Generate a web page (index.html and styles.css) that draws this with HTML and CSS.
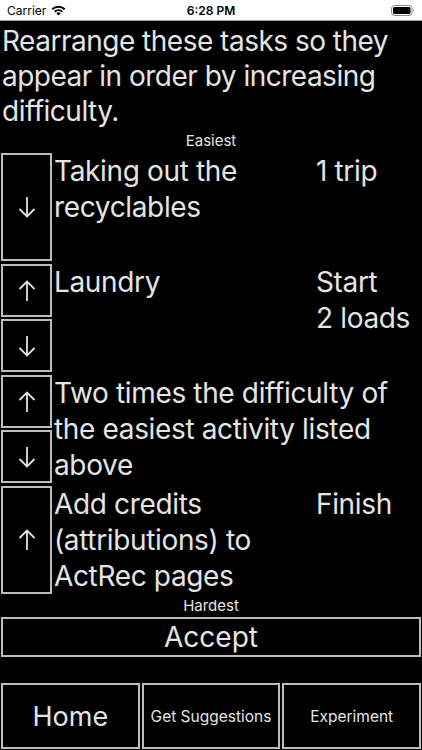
FILE: index.html
```html
<!DOCTYPE html>
<html lang="en">
<head>
<meta charset="utf-8">
<title>Rearrange tasks</title>
<link rel="stylesheet" href="styles.css">
</head>
<body>
<div class="status">
  <div class="status-left">
    <span>Carrier</span>
    <svg class="wifi" width="15" height="11" viewBox="0 0 15 11">
      <path d="M0.6 3.6 A10 10 0 0 1 14.4 3.6 L13 5 A8 8 0 0 0 2 5 Z" fill="#000"/>
      <path d="M3 6 A6.5 6.5 0 0 1 12 6 L10.6 7.4 A4.5 4.5 0 0 0 4.4 7.4 Z" fill="#000"/>
      <path d="M5.4 8.4 A3 3 0 0 1 9.6 8.4 L7.5 10.6 Z" fill="#000"/>
    </svg>
  </div>
  <div class="status-time">6:28 PM</div>
  <div class="status-right">
    <svg width="24" height="11" viewBox="0 0 24 11">
      <rect x="0.5" y="0.5" width="20.5" height="10" rx="3" fill="none" stroke="#888" stroke-width="1"/>
      <rect x="2" y="2" width="17.5" height="7" rx="1.6" fill="#000"/>
      <path d="M22 3.8 Q23.4 5.5 22 7.2 Z" fill="#888"/>
    </svg>
  </div>
</div>

<main class="screen">
  <p class="title">Rearrange these tasks so they appear in order by increasing difficulty.</p>
  <div class="label label-top">Easiest</div>

  <div class="rows">
    <div class="row">
      <div class="btns">
        <button class="arrow-btn" aria-label="Move down">
          <svg width="18" height="22" viewBox="0 0 18 22"><path d="M9 1 V20.5 M1.5 13 L9 20.5 L16.5 13" fill="none" stroke="#e2e2e2" stroke-width="1.8"/></svg>
        </button>
      </div>
      <div class="task">Taking out the recyclables</div>
      <div class="aside">1 trip</div>
    </div>

    <div class="row">
      <div class="btns">
        <button class="arrow-btn" aria-label="Move up">
          <svg width="18" height="22" viewBox="0 0 18 22"><path d="M9 21 V1.5 M1.5 9 L9 1.5 L16.5 9" fill="none" stroke="#e2e2e2" stroke-width="1.8"/></svg>
        </button>
        <button class="arrow-btn" aria-label="Move down">
          <svg width="18" height="22" viewBox="0 0 18 22"><path d="M9 1 V20.5 M1.5 13 L9 20.5 L16.5 13" fill="none" stroke="#e2e2e2" stroke-width="1.8"/></svg>
        </button>
      </div>
      <div class="task">Laundry</div>
      <div class="aside">Start<br>2 loads</div>
    </div>

    <div class="row">
      <div class="btns">
        <button class="arrow-btn" aria-label="Move up">
          <svg width="18" height="22" viewBox="0 0 18 22"><path d="M9 21 V1.5 M1.5 9 L9 1.5 L16.5 9" fill="none" stroke="#e2e2e2" stroke-width="1.8"/></svg>
        </button>
        <button class="arrow-btn" aria-label="Move down">
          <svg width="18" height="22" viewBox="0 0 18 22"><path d="M9 1 V20.5 M1.5 13 L9 20.5 L16.5 13" fill="none" stroke="#e2e2e2" stroke-width="1.8"/></svg>
        </button>
      </div>
      <div class="task">Two times the difficulty of the easiest activity listed above</div>
    </div>

    <div class="row">
      <div class="btns">
        <button class="arrow-btn" aria-label="Move up">
          <svg width="18" height="22" viewBox="0 0 18 22"><path d="M9 21 V1.5 M1.5 9 L9 1.5 L16.5 9" fill="none" stroke="#e2e2e2" stroke-width="1.8"/></svg>
        </button>
      </div>
      <div class="task">Add credits (attributions) to ActRec pages</div>
      <div class="aside">Finish</div>
    </div>
  </div>

  <div class="label label-bottom">Hardest</div>
  <button class="accept">Accept</button>

  <nav class="bottom-bar">
    <button class="nav-btn nav-home">Home</button>
    <button class="nav-btn nav-small">Get Suggestions</button>
    <button class="nav-btn nav-small">Experiment</button>
  </nav>
</main>
</body>
</html>
```

FILE: styles.css
```css
* { box-sizing: border-box; }

html, body {
  margin: 0;
  padding: 0;
  background: #000;
}

body {
  width: 422px;
  height: 750px;
  overflow: hidden;
  font-family: "Inter", "Roboto", "Liberation Sans", sans-serif;
  color: #e4e4e4;
}

.status {
  height: 21px;
  background: #fff;
  border-bottom: 1px solid #9a9a9a;
  display: flex;
  align-items: center;
  justify-content: space-between;
  padding: 0 7px 0 7px;
  color: #000;
  font-size: 12px;
  position: relative;
}

.status-left {
  display: flex;
  align-items: center;
  gap: 5px;
}

.status-time {
  position: absolute;
  left: 0;
  right: 0;
  text-align: center;
  font-weight: 600;
  pointer-events: none;
}

.status-right {
  display: flex;
  align-items: center;
}

.screen {
  display: flex;
  flex-direction: column;
}

.title {
  margin: 0;
  padding: 3px 2px 0 2px;
  font-size: 28px;
  line-height: 35px;
  letter-spacing: -0.5px;
  height: 108px;
}

.label {
  text-align: center;
  font-size: 15px;
}

.label-top {
  height: 24px;
  line-height: 24px;
}

.label-bottom {
  height: 23px;
  line-height: 23px;
}

.rows {
  display: flex;
  flex-direction: column;
  gap: 3px;
  padding: 0 1px;
}

.row {
  display: flex;
  gap: 2px;
  height: 108px;
}

.btns {
  width: 51px;
  flex: none;
  display: flex;
  flex-direction: column;
  gap: 2px;
}

.arrow-btn {
  flex: 1;
  margin: 0;
  padding: 0;
  background: #000;
  border: 2px solid #bdbdbd;
  display: flex;
  align-items: center;
  justify-content: center;
}

.task {
  flex: 1;
  font-size: 28px;
  line-height: 36px;
  letter-spacing: -0.35px;
}

.aside {
  width: 105px;
  flex: none;
  font-size: 28px;
  line-height: 36px;
  letter-spacing: -0.35px;
}

.accept {
  margin: 0 1px;
  height: 40px;
  background: #000;
  border: 2px solid #bdbdbd;
  color: #e4e4e4;
  font-family: inherit;
  font-size: 28px;
  padding: 0;
}

.bottom-bar {
  margin-top: 26px;
  padding: 0 1px;
  display: grid;
  grid-template-columns: 1fr 1fr 1fr;
  gap: 2px;
  height: 66px;
}

.nav-btn {
  margin: 0;
  padding: 0;
  background: #000;
  border: 2px solid #bdbdbd;
  color: #e4e4e4;
  font-family: inherit;
}

.nav-home {
  font-size: 27px;
}

.nav-small {
  font-size: 15.5px;
}
```
